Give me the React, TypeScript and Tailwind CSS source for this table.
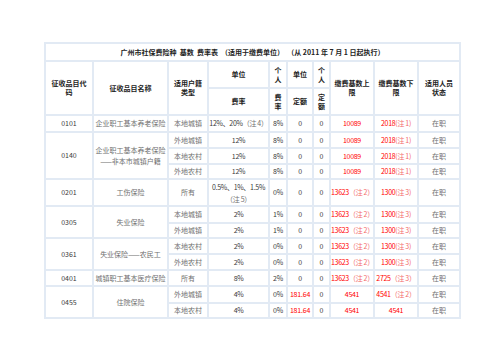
import React from "react";

const RED = "text-[#ff0000]";
const PINK = "text-[#f36b6b]";

function Note({ n, paren = "full" }: { n: string; paren?: "full" | "half" }) {
  return <span className={PINK}>{paren === "full" ? `（注 ${n}）` : `(注 ${n})`}</span>;
}

const td = "border-2 border-[#e2eaf4] text-center align-middle p-0 leading-[9px]";
const cn = "text-[#707070]";
const num = "text-[#3a3a3a]";

type Row = {
  code?: { v: string; rs: number };
  name?: { v: React.ReactNode; rs: number };
  type: string;
  rate: React.ReactNode;
  pr: string;
  uq: React.ReactNode;
  pq: string;
  up: React.ReactNode;
  low: React.ReactNode;
  h: string;
};

const up10089 = <span className={RED}>10089</span>;
const low2018 = (
  <>
    <span className={RED}>2018</span>
    <Note n="1" paren="half" />
  </>
);
const up13623 = (
  <>
    <span className={RED}>13623</span>
    <Note n="2" />
  </>
);
const low1300 = (
  <>
    <span className={RED}>1300</span>
    <Note n="3" paren="half" />
  </>
);

const rows: Row[] = [
  { code: { v: "0101", rs: 1 }, name: { v: "企业职工基本养老保险", rs: 1 }, type: "本地城镇", rate: <>12%、20%<span className={cn}>（注 4）</span></>, pr: "8%", uq: "0", pq: "0", up: up10089, low: low2018, h: "h-[17px]" },
  { code: { v: "0140", rs: 3 }, name: { v: <>企业职工基本养老保险<br />——非本市城镇户籍</>, rs: 3 }, type: "外地城镇", rate: "12%", pr: "8%", uq: "0", pq: "0", up: up10089, low: low2018, h: "h-[16px]" },
  { type: "本地农村", rate: "12%", pr: "8%", uq: "0", pq: "0", up: up10089, low: low2018, h: "h-[16px]" },
  { type: "外地农村", rate: "12%", pr: "8%", uq: "0", pq: "0", up: up10089, low: low2018, h: "h-[15px]" },
  { code: { v: "0201", rs: 1 }, name: { v: "工伤保险", rs: 1 }, type: "所有", rate: <span className="leading-[12px] inline-block">0.5%、1%、1.5%<br /><span className={cn}>（注 5）</span></span>, pr: "0%", uq: "0", pq: "0", up: up13623, low: low1300, h: "h-[27px]" },
  { code: { v: "0305", rs: 2 }, name: { v: "失业保险", rs: 2 }, type: "本地城镇", rate: "2%", pr: "1%", uq: "0", pq: "0", up: up13623, low: low1300, h: "h-[17px]" },
  { type: "外地城镇", rate: "2%", pr: "1%", uq: "0", pq: "0", up: up13623, low: low1300, h: "h-[15px]" },
  { code: { v: "0361", rs: 2 }, name: { v: "失业保险——农民工", rs: 2 }, type: "本地农村", rate: "2%", pr: "0%", uq: "0", pq: "0", up: up13623, low: low1300, h: "h-[16px]" },
  { type: "外地农村", rate: "2%", pr: "0%", uq: "0", pq: "0", up: up13623, low: low1300, h: "h-[16px]" },
  { code: { v: "0401", rs: 1 }, name: { v: "城镇职工基本医疗保险", rs: 1 }, type: "所有", rate: "8%", pr: "2%", uq: "0", pq: "0", up: up13623, low: <><span className={RED}>2725</span><Note n="3" /></>, h: "h-[16px]" },
  { code: { v: "0455", rs: 2 }, name: { v: "住院保险", rs: 2 }, type: "外地城镇", rate: "4%", pr: "0%", uq: <span className={RED}>181.64</span>, pq: "0", up: <span className={RED}>4541</span>, low: <><span className={RED}>4541</span><Note n="2" /></>, h: "h-[17px]" },
  { type: "本地农村", rate: "4%", pr: "0%", uq: <span className={RED}>181.64</span>, pq: "0", up: <span className={RED}>4541</span>, low: <span className={RED}>4541</span>, h: "h-[15px]" },
];

const th = "border-2 border-[#e2eaf4] text-center align-middle p-0 font-bold text-[#222] leading-[9px]";

export default function App() {
  return (
    <div
      className="w-[503px] h-[356px] bg-white pt-[42px] pl-[44px] text-[7px]"
      style={{ fontFamily: '"Noto Sans CJK SC", "Noto Sans", sans-serif' }}
    >
      <table className="border-collapse table-fixed w-[415px]">
        <colgroup>
          <col className="w-[48px]" />
          <col className="w-[75px]" />
          <col className="w-[40px]" />
          <col className="w-[61px]" />
          <col className="w-[18px]" />
          <col className="w-[26px]" />
          <col className="w-[17px]" />
          <col className="w-[44px]" />
          <col className="w-[44px]" />
          <col className="w-[42px]" />
        </colgroup>
        <tbody>
          <tr className="h-[18px]">
            <td colSpan={10} className={th + " whitespace-pre"}>
              {"广州市社保费险种  基数  费率表  （适用于缴费单位）  （从 2011 年 7 月 1 日起执行）"}
            </td>
          </tr>
          <tr className="h-[27px]">
            <td rowSpan={2} className={th}>征收品目代<br />码</td>
            <td rowSpan={2} className={th}>征收品目名称</td>
            <td rowSpan={2} className={th}>适用户籍<br />类型</td>
            <td className={th}>单位</td>
            <td className={th}>个<br />人</td>
            <td className={th}>单位</td>
            <td className={th}>个<br />人</td>
            <td rowSpan={2} className={th}>缴费基数上<br />限</td>
            <td rowSpan={2} className={th}>缴费基数下<br />限</td>
            <td rowSpan={2} className={th}>适用人员<br />状态</td>
          </tr>
          <tr className="h-[27px]">
            <td className={th}>费率</td>
            <td className={th}>费<br />率</td>
            <td className={th}>定额</td>
            <td className={th}>定<br />额</td>
          </tr>
          {rows.map((r, i) => (
            <tr key={i} className={r.h}>
              {r.code && (
                <td rowSpan={r.code.rs} className={td + " " + num}>{r.code.v}</td>
              )}
              {r.name && (
                <td rowSpan={r.name.rs} className={td + " " + cn + " leading-[11px]"}>{r.name.v}</td>
              )}
              <td className={td + " " + cn}>{r.type}</td>
              <td className={td + " " + num + " whitespace-nowrap tracking-[-0.3px]"}>{r.rate}</td>
              <td className={td + " " + num + " tracking-[-0.2px]"}>{r.pr}</td>
              <td className={td + " " + num + " tracking-[-0.2px]"}>{r.uq}</td>
              <td className={td + " " + num}>{r.pq}</td>
              <td className={td + " whitespace-nowrap tracking-[-0.3px]"}>{r.up}</td>
              <td className={td + " whitespace-nowrap tracking-[-0.3px]"}>{r.low}</td>
              <td className={td + " " + cn}>在职</td>
            </tr>
          ))}
        </tbody>
      </table>
    </div>
  );
}
